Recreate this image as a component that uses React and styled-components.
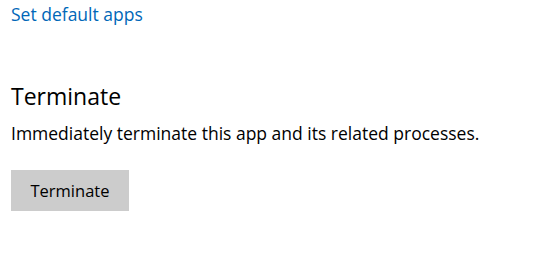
import React from "react";
import styled, { createGlobalStyle } from "styled-components";

const GlobalStyle = createGlobalStyle`
  html, body {
    margin: 0;
    padding: 0;
    background: #ffffff;
  }
  body {
    font-family: "Open Sans", "Noto Sans", sans-serif;
    color: #000000;
  }
`;

const Page = styled.div`
  width: 554px;
  height: 278px;
  box-sizing: border-box;
  padding: 2px 11px 0;
  display: flex;
  flex-direction: column;
  align-items: flex-start;
`;

const Link = styled.a`
  font-size: 17.5px;
  line-height: 24px;
  color: #0067b8;
  text-decoration: none;
  cursor: pointer;
`;

const Section = styled.section`
  margin-top: 54px;
  display: flex;
  flex-direction: column;
  align-items: flex-start;
`;

const Heading = styled.h2`
  margin: 0;
  font-size: 23px;
  font-weight: 400;
  line-height: 32px;
`;

const Description = styled.p`
  margin: 9px 0 0;
  font-size: 17.5px;
  line-height: 24px;
`;

const Button = styled.button`
  margin-top: 25px;
  width: 118px;
  height: 41px;
  padding: 0 0 1px;
  border: none;
  background: #cccccc;
  font-family: inherit;
  font-size: 16.5px;
  color: #000000;
  cursor: pointer;
  &:hover {
    background: #bbbbbb;
  }
`;

export default function App() {
  return (
    <>
      <GlobalStyle />
      <Page>
        <Link>Set default apps</Link>
        <Section>
          <Heading>Terminate</Heading>
          <Description>
            Immediately terminate this app and its related processes.
          </Description>
          <Button>Terminate</Button>
        </Section>
      </Page>
    </>
  );
}
